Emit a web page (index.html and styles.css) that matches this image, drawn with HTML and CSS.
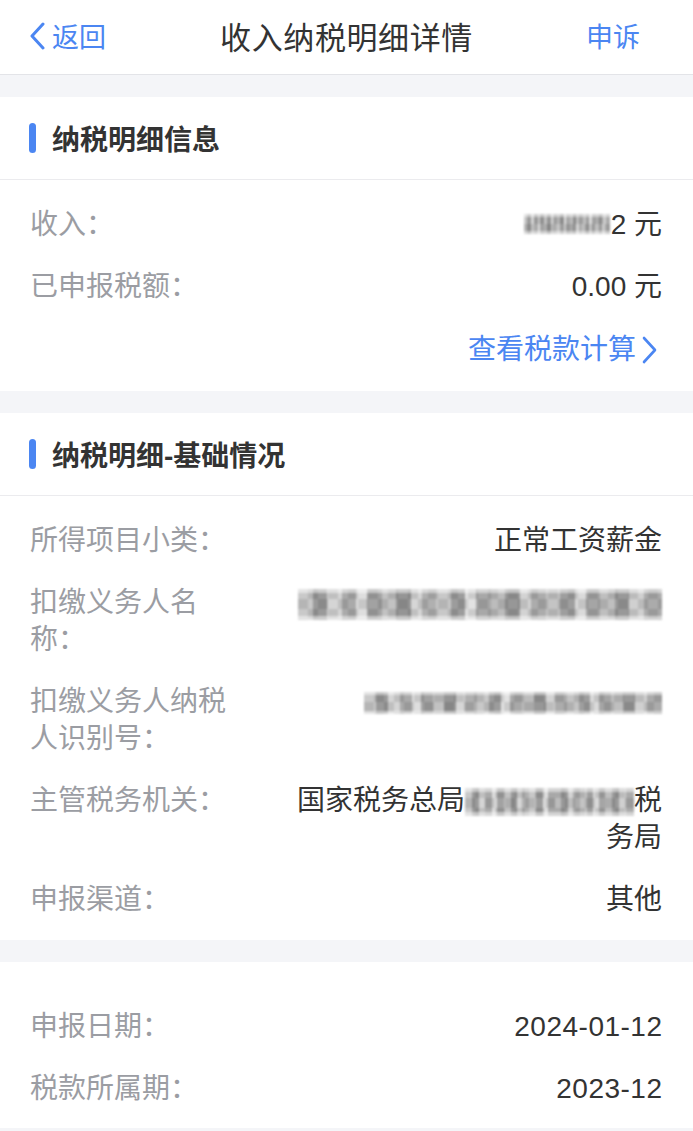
FILE: index.html
```html
<!DOCTYPE html>
<html lang="zh-CN">
<head>
<meta charset="utf-8">
<title>收入纳税明细详情</title>
<link rel="stylesheet" href="styles.css">
</head>
<body>
<header class="nav">
  <a class="nav-back">
    <svg class="nav-back-icon" viewBox="0 0 18 28" width="18" height="28"><path d="M15 2 L4 14 L15 26" fill="none" stroke="currentColor" stroke-width="3" stroke-linecap="round" stroke-linejoin="round"/></svg>
    <span>返回</span>
  </a>
  <h1 class="nav-title">收入纳税明细详情</h1>
  <a class="nav-action">申诉</a>
</header>

<section class="card card-info">
  <div class="card-head"><span class="card-bar"></span><span class="card-title">纳税明细信息</span></div>
  <div class="card-body">
    <div class="row"><div class="label">收入：</div><div class="value"><span class="mosaic mosaic-income"></span>2 元</div></div>
    <div class="row"><div class="label">已申报税额：</div><div class="value">0.00 元</div></div>
    <div class="row row-link"><a class="link">查看税款计算<svg class="link-icon" viewBox="0 0 18 28" width="18" height="28"><path d="M3 2 L14 14 L3 26" fill="none" stroke="currentColor" stroke-width="2.6" stroke-linecap="round" stroke-linejoin="round"/></svg></a></div>
  </div>
</section>

<section class="card card-basic">
  <div class="card-head"><span class="card-bar"></span><span class="card-title">纳税明细-基础情况</span></div>
  <div class="card-body">
    <div class="row"><div class="label">所得项目小类：</div><div class="value">正常工资薪金</div></div>
    <div class="row"><div class="label">扣缴义务人名称：</div><div class="value"><span class="mosaic mosaic-company"></span></div></div>
    <div class="row"><div class="label">扣缴义务人纳税人识别号：</div><div class="value"><span class="mosaic mosaic-id"></span></div></div>
    <div class="row"><div class="label">主管税务机关：</div><div class="value">国家税务总局<span class="mosaic mosaic-bureau"></span>税务局</div></div>
    <div class="row"><div class="label">申报渠道：</div><div class="value">其他</div></div>
  </div>
</section>

<section class="card card-plain">
  <div class="card-body">
    <div class="row"><div class="label">申报日期：</div><div class="value num">2024-01-12</div></div>
    <div class="row"><div class="label">税款所属期：</div><div class="value num">2023-12</div></div>
  </div>
</section>
</body>
</html>
```

FILE: styles.css
```css
* { box-sizing: border-box; }
html, body { margin: 0; padding: 0; }
body {
  background: #f4f5f8;
  font-family: "Liberation Sans", "Noto Sans CJK SC", sans-serif;
  color: #333;
  width: 693px;
  min-height: 1131px;
}

.nav {
  height: 75px;
  background: #fff;
  border-bottom: 1px solid #e3e4e8;
  display: grid;
  grid-template-columns: 1fr auto 1fr;
  align-items: center;
  padding: 0 28px 3px;
}
.nav-back {
  display: flex;
  align-items: center;
  gap: 6px;
  color: #4b86f2;
  font-size: 27px;
  justify-self: start;
}
.nav-back-icon { display: block; }
.nav-title {
  margin: 0;
  font-size: 31px;
  font-weight: 400;
  color: #333;
  letter-spacing: 0.6px;
}
.nav-action {
  justify-self: end;
  margin-right: 25px;
  color: #4b86f2;
  font-size: 27px;
}

.card {
  background: #fff;
  margin-top: 22px;
}
.card-head {
  height: 83px;
  border-bottom: 1px solid #ebebee;
  display: flex;
  align-items: center;
  padding-left: 29px;
  gap: 16px;
}
.card-bar {
  width: 7px;
  height: 30px;
  border-radius: 4px;
  background: #4b86f2;
}
.card-title {
  font-size: 28px;
  font-weight: 600;
  color: #333;
}
.card-info .card-body { padding: 13px 0 10.5px; }
.card-basic .card-body { padding: 13px 0 10px; }
.card-plain .card-body { padding: 33px 0 9px; }

.row {
  display: flex;
  padding: 12.5px 31px 12.5px 30px;
  font-size: 28px;
  line-height: 37px;
}
.label {
  width: 210px;
  flex: none;
  color: #9b9da3;
}
.value {
  flex: 1;
  margin-left: 47px;
  text-align: right;
  color: #333;
}
.num { letter-spacing: 0.5px; margin-right: -0.5px; }
.row-link {
  justify-content: flex-end;
  padding-right: 34px;
  padding-top: 14px;
}
.link {
  color: #4b86f2;
  display: flex;
  align-items: center;
  gap: 5px;
}
.link-icon { display: block; }

.mosaic {
  display: inline-block;
  vertical-align: middle;
  filter: blur(1.3px);
  background-color: #cfcfcf;
  background-image:
    linear-gradient(180deg, rgba(255,255,255,0.5) 0 14%, rgba(255,255,255,0) 14% 86%, rgba(255,255,255,0.5) 86%),
    conic-gradient(rgba(0,0,0,0.10) 25%, rgba(0,0,0,0) 0 50%, rgba(0,0,0,0.10) 0 75%, rgba(0,0,0,0) 0),
    linear-gradient(90deg,
      #c9c9c9 0 4%, #9a9a9a 4% 8%, #d5d5d5 8% 12%, #aaa 12% 16%, #dedede 16% 19%,
      #a2a2a2 19% 23%, #c2c2c2 23% 27%, #959595 27% 31%, #d6d6d6 31% 34%, #b0b0b0 34% 38%,
      #c8c8c8 38% 42%, #9c9c9c 42% 46%, #e2e2e2 46% 49%, #a8a8a8 49% 53%, #bcbcbc 53% 57%,
      #979797 57% 61%, #d3d3d3 61% 64%, #acacac 64% 68%, #c4c4c4 68% 72%, #9e9e9e 72% 76%,
      #dadada 76% 79%, #a5a5a5 79% 83%, #bfbfbf 83% 87%, #999 87% 91%, #d0d0d0 91% 95%, #ababab 95% 100%);
  background-size: 100% 100%, 20px 20px, 100% 100%;
}
.mosaic-income { width: 86px; height: 20px; margin-right: 1px; position: relative; top: -2px; }
.mosaic-company { width: 364px; height: 31px; }
.mosaic-id { width: 298px; height: 22px; }
.mosaic-bureau { width: 169px; height: 28px; }
```
